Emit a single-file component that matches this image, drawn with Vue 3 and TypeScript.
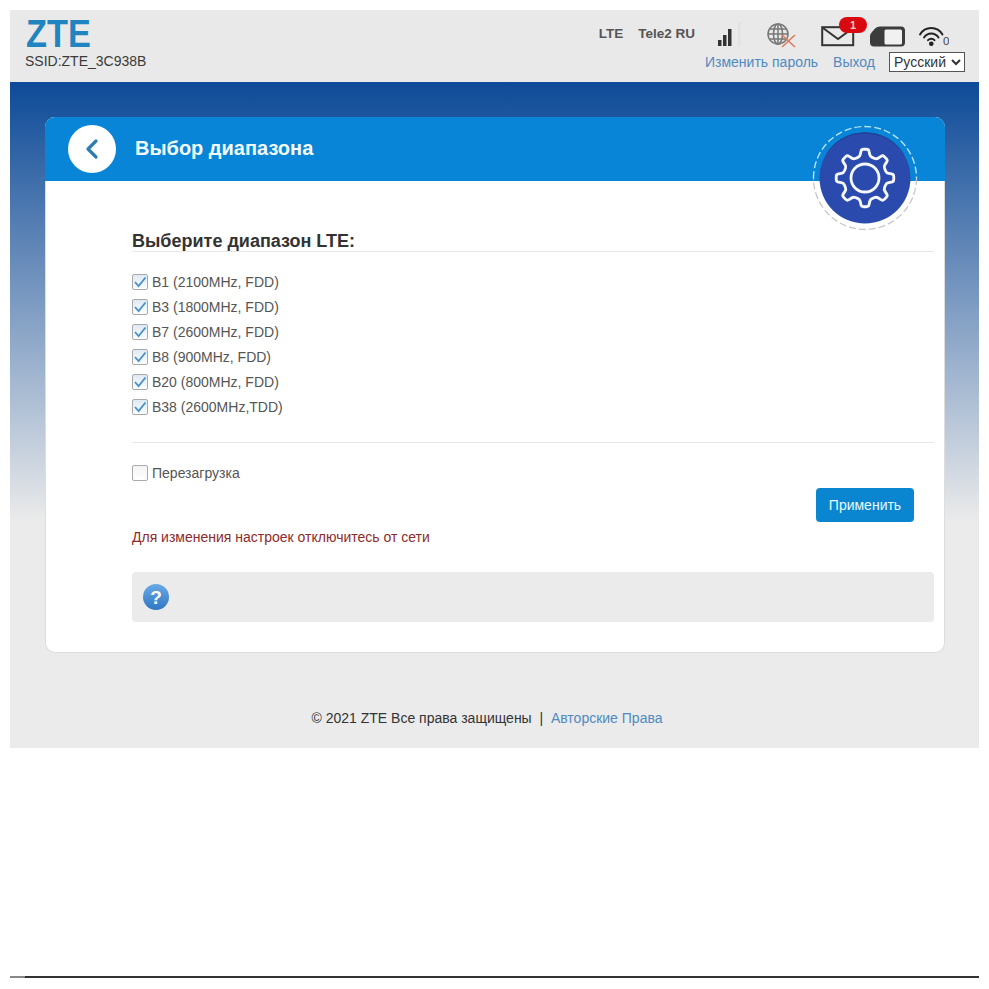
<template>
  <div class="page">
    <div class="panel">
      <header class="top">
        <div class="brand">
          <div class="logo">ZTE</div>
          <div class="ssid">SSID:ZTE_3C938B</div>
        </div>
        <div class="top-right">
          <div class="status">
            <span class="net">LTE</span>
            <span class="net operator">Tele2 RU</span>
            <svg class="signal" width="26" height="24" viewBox="0 0 26 24">
              <rect x="2" y="15" width="3.5" height="6" fill="#333" />
              <rect x="7" y="10" width="3.5" height="11" fill="#333" />
              <rect x="12" y="4" width="3.5" height="17" fill="#333" />
              <rect x="22" y="-3" width="2.5" height="24" fill="#e2e2e2" />
            </svg>
            <svg class="globe" width="30" height="26" viewBox="0 0 30 26">
              <g fill="none" stroke="#777" stroke-width="1.5">
                <circle cx="11" cy="11" r="10" />
                <ellipse cx="11" cy="11" rx="4.5" ry="10" />
                <path d="M11 1v20M1 11h20M2.5 6h17M2.5 16h17" />
              </g>
              <path d="M15 12l13 12M28 12L15 24" stroke="#e07a5a" stroke-width="1.6" fill="none" />
            </svg>
            <div class="mail">
              <svg width="34" height="24" viewBox="0 0 34 24">
                <rect x="1.2" y="3.2" width="31" height="18" fill="none" stroke="#333" stroke-width="2" />
                <path d="M2 4l15 11L32 4" fill="none" stroke="#333" stroke-width="2" />
              </svg>
              <span class="badge">1</span>
            </div>
            <svg class="sim" width="36" height="22" viewBox="0 0 36 22">
              <path d="M10 .5h21a4 4 0 0 1 4 4v12a4 4 0 0 1-4 4H4a4 4 0 0 1-4-4V10q0-2 2-4l3-3.5q2-2 5-2z" fill="#3c3c3c" />
              <rect x="14.5" y="3.5" width="17.5" height="15" rx="1.5" fill="#f1f1f1" />
            </svg>
            <svg class="wifi" width="31" height="24" viewBox="0 0 31 24">
              <g fill="none" stroke="#222" stroke-width="1.9" stroke-linecap="round">
                <path d="M2 9.5A13 13 0 0 1 24.5 9.5" />
                <path d="M6 12.5A8.5 8.5 0 0 1 20.5 12.5" />
                <path d="M10 15.2A4.4 4.4 0 0 1 16.5 15.2" />
              </g>
              <circle cx="13.3" cy="18.7" r="2.3" fill="#222" />
              <text x="25" y="20" class="wifi-count">0</text>
            </svg>
          </div>
          <div class="links">
            <a class="link">Изменить пароль</a>
            <a class="link logout">Выход</a>
            <select class="lang">
              <option>Русский</option>
            </select>
          </div>
        </div>
      </header>

      <main class="stage">
        <section class="card">
          <div class="card-head">
            <span class="back">
              <svg width="48" height="48" viewBox="0 0 48 48">
                <path d="M28 16l-8 8 8 8" fill="none" stroke="#2d7db3" stroke-width="3.2" stroke-linecap="round" stroke-linejoin="round" />
              </svg>
            </span>
            <h1 class="title">Выбор диапазона</h1>
            <svg class="gear-badge" width="106" height="106" viewBox="0 0 106 106">
              <path d="M1.5 53a51.5 51.5 0 0 1 103 0" fill="none" stroke="#b5e3f7" stroke-width="1.4" stroke-dasharray="7 3" />
              <path d="M104.5 53a51.5 51.5 0 0 1-103 0" fill="none" stroke="#cbc6c6" stroke-width="1.3" stroke-dasharray="7 3" />
              <circle cx="53" cy="53" r="45.5" fill="#2a4bad" />
              <path d="M13 31a45.5 45.5 0 0 1 80 0a47 47 0 0 0-80 0z" fill="#23409a" />
              <path :d="gearPath" fill="none" stroke="#f6f8ff" stroke-width="2.8" stroke-linejoin="round" />
              <circle cx="53" cy="53" r="14" fill="none" stroke="#f6f8ff" stroke-width="2.8" />
            </svg>
          </div>

          <div class="card-body">
            <h2 class="subtitle">Выберите диапазон LTE:</h2>
            <ul class="bands">
              <li v-for="band in bands" :key="band" class="check-row">
                <span class="box on">
                  <svg width="16" height="16" viewBox="0 0 16 16">
                    <path d="M3 8l3.6 4L13.5 3.5" fill="none" stroke="#4a90c8" stroke-width="1.8" />
                  </svg>
                </span>
                {{ band }}
              </li>
            </ul>
            <div class="reboot">
              <div class="check-row">
                <span class="box"></span>
                Перезагрузка
              </div>
            </div>
            <div class="actions">
              <button class="apply">Применить</button>
            </div>
            <p class="warn">Для изменения настроек отключитесь от сети</p>
            <div class="help">
              <svg width="28" height="28" viewBox="0 0 28 28">
                <defs>
                  <linearGradient id="helpFill" x1="0" y1="0" x2="0" y2="1">
                    <stop offset="0" stop-color="#6aa9e4" />
                    <stop offset="1" stop-color="#2f78c4" />
                  </linearGradient>
                </defs>
                <circle cx="14" cy="14" r="13" fill="url(#helpFill)" />
                <text x="14" y="20.5" class="help-mark">?</text>
              </svg>
            </div>
          </div>
        </section>

        <footer class="foot">
          © 2021 ZTE Все права защищены &nbsp;|&nbsp; <a class="link">Авторские Права</a>
        </footer>
      </main>
    </div>
    <div class="rule"></div>
  </div>
</template>

<script setup lang="ts">
const bands = [
  'B1 (2100MHz, FDD)',
  'B3 (1800MHz, FDD)',
  'B7 (2600MHz, FDD)',
  'B8 (900MHz, FDD)',
  'B20 (800MHz, FDD)',
  'B38 (2600MHz,TDD)',
]

// gear outline, corners softened with a quadratic curve
function buildGear(cx: number, cy: number, inner: number, outer: number, teeth: number) {
  const step = (Math.PI * 2) / teeth
  const pts: [number, number][] = []
  for (let i = 0; i < teeth; i++) {
    const a = i * step - Math.PI / 2
    const corners: [number, number][] = [
      [inner, a - step * 0.3],
      [outer, a - step * 0.16],
      [outer, a + step * 0.16],
      [inner, a + step * 0.3],
    ]
    corners.forEach(([r, t]) => pts.push([cx + r * Math.cos(t), cy + r * Math.sin(t)]))
  }
  const lerp = (p: [number, number], q: [number, number], k: number) =>
    `${(p[0] + (q[0] - p[0]) * k).toFixed(2)} ${(p[1] + (q[1] - p[1]) * k).toFixed(2)}`
  let d = ''
  pts.forEach((p, i) => {
    const prev = pts[(i + pts.length - 1) % pts.length]
    const next = pts[(i + 1) % pts.length]
    d += `${i ? 'L' : 'M'}${lerp(p, prev, 0.3)}Q${p[0].toFixed(2)} ${p[1].toFixed(2)} ${lerp(p, next, 0.3)}`
  })
  return d + 'Z'
}

const gearPath = buildGear(53, 53, 22, 29, 8)
</script>

<style scoped>
.page {
  width: 969px;
  padding: 10px 10px 0;
  font-family: "Liberation Sans", Arial, sans-serif;
  font-size: 14px;
  color: #444;
}

.panel {
  background: #ebebeb;
}

.top {
  height: 72px;
  padding: 0 14px 0 15px;
  background: #e9e9e9;
  display: flex;
  justify-content: space-between;
}

.brand {
  padding-top: 8px;
}

.logo {
  width: 80px;
  height: 30px;
  margin-left: 1px;
  font-size: 39px;
  font-weight: 700;
  line-height: 31px;
  color: #1f84c0;
  transform: scaleX(0.88);
  transform-origin: left center;
}

.ssid {
  margin-top: 5px;
  font-size: 14px;
  line-height: 16px;
  color: #3a3a3a;
}

.top-right {
  display: flex;
  flex-direction: column;
  align-items: flex-end;
}

.status {
  height: 42px;
  display: flex;
  align-items: flex-end;
}

.net {
  font-size: 13.5px;
  font-weight: 700;
  line-height: 16px;
  color: #555;
  margin-bottom: 10px;
}

.operator {
  margin-left: 15px;
}

.signal {
  margin: 0 0 3px 21px;
  overflow: visible;
}

.globe {
  margin: 0 0 3px 25px;
}

.mail {
  position: relative;
  margin: 0 0 4px 24px;
  height: 24px;
}

.mail svg {
  display: block;
}

.badge {
  position: absolute;
  left: 18px;
  top: -7px;
  width: 28px;
  height: 16px;
  border-radius: 8px;
  background: #d9090f;
  color: #f4d0c0;
  font-size: 11px;
  font-weight: 700;
  line-height: 16px;
  text-align: center;
}

.sim {
  margin: 0 0 4px 15px;
}

.wifi {
  margin: 0 16px 3px 12px;
}

.wifi-count {
  font-size: 11.5px;
  fill: #444;
}

.links {
  display: flex;
  align-items: center;
  height: 20px;
}

.link {
  color: #4f8ac0;
}

.logout {
  margin-left: 15px;
}

.lang {
  width: 76px;
  height: 20px;
  margin-left: 14px;
  padding: 0;
  border: 1px solid #555;
  border-radius: 0;
  background: #fff;
  font-family: "Liberation Sans", Arial, sans-serif;
  font-size: 14px;
  color: #333;
}

.stage {
  padding: 35px 34px 0 35px;
  height: 666px;
  box-sizing: border-box;
  background: linear-gradient(180deg, #0d4a98 0, #ebebeb 440px);
}

.card {
  width: 900px;
  box-sizing: border-box;
  height: 536px;
  background: #fff;
  border: 1px solid #ddd;
  border-top: 0;
  border-radius: 10px;
}

.card-head {
  position: relative;
  height: 64px;
  margin: 0 -1px;
  padding-left: 23px;
  display: flex;
  align-items: center;
  background: #0885d6;
  border-radius: 10px 10px 0 0;
}

.back {
  width: 48px;
  height: 48px;
  border-radius: 50%;
  background: #fff;
}

.back svg {
  display: block;
}

.title {
  margin: 0 0 2px 19px;
  font-size: 20px;
  font-weight: 700;
  color: #f2fbff;
}

.gear-badge {
  position: absolute;
  left: 766.5px;
  top: 8px;
}

.card-body {
  padding: 50px 10px 0 86px;
}

.subtitle {
  margin: 0;
  font-size: 18px;
  line-height: 20px;
  font-weight: 700;
  color: #333;
  border-bottom: 1px solid #e8e8e8;
}

.bands {
  list-style: none;
  margin: 17px 0 0;
  padding: 0 0 23px;
  border-bottom: 1px solid #e8e8e8;
}

.check-row {
  display: flex;
  align-items: center;
  gap: 4px;
  height: 25px;
  color: #555;
}

.box {
  width: 16px;
  height: 16px;
  box-sizing: border-box;
  border: 1px solid #aaa;
  border-radius: 2px;
  background: linear-gradient(180deg, #f4f4f4, #fff);
}

.box.on {
  background: linear-gradient(180deg, #dfeaf5, #fbfdff);
}

.box svg {
  display: block;
  margin: -1px;
}

.reboot {
  margin-top: 17px;
}

.actions {
  display: flex;
  justify-content: flex-end;
  margin-top: 3px;
  padding-right: 20px;
}

.apply {
  width: 98px;
  height: 34px;
  padding: 0;
  border: 0;
  border-radius: 4px;
  background: #0a86d0;
  color: #eafaff;
  font-family: "Liberation Sans", Arial, sans-serif;
  font-size: 14px;
}

.warn {
  margin: 7px 0 0;
  line-height: 16px;
  color: #8f2a2a;
}

.help {
  margin-top: 27px;
  height: 50px;
  padding-left: 10px;
  display: flex;
  align-items: center;
  background: #ebebeb;
  border-radius: 4px;
}

.help-mark {
  font-size: 19px;
  font-weight: 700;
  fill: #fff;
  text-anchor: middle;
}

.foot {
  margin-top: 57px;
  padding-right: 16px;
  line-height: 16px;
  text-align: center;
  color: #333;
}

.rule {
  height: 2px;
  margin-top: 228px;
  background: linear-gradient(90deg, #888 0 15px, #333 15px);
}
</style>

<style>
body {
  overflow: hidden;
}
</style>
